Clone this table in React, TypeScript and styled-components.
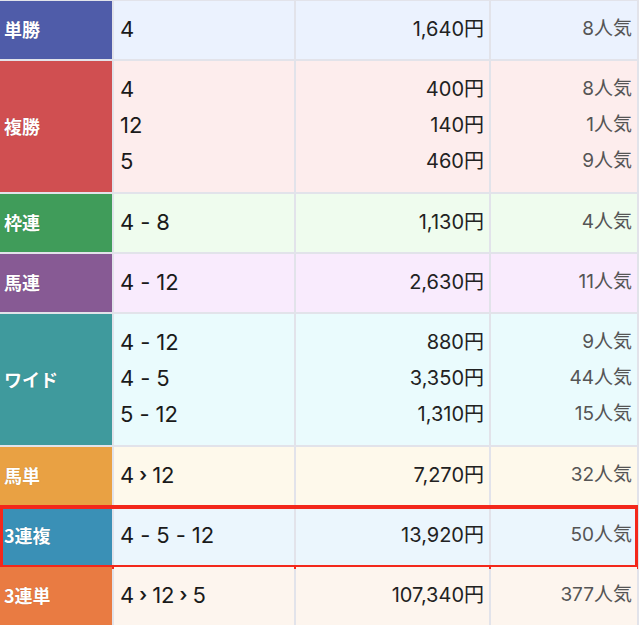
import React from "react";
import styled, { createGlobalStyle } from "styled-components";

const Global = createGlobalStyle`
  html, body { margin: 0; padding: 0; background: #ffffff; }
  body { font-family: Inter, "Noto Sans CJK JP", sans-serif; }
`;

type Row = {
  label: string;
  labelBg: string;
  bg: string;
  sep?: "-" | ">";
  items: { nums: string[]; pay: string; pop: string }[];
  highlight?: boolean;
};

const rows: Row[] = [
  { label: "単勝", labelBg: "#4f5ca9", bg: "#ebf2fe", items: [{ nums: ["4"], pay: "1,640円", pop: "8人気" }] },
  {
    label: "複勝", labelBg: "#d04f51", bg: "#fdeded",
    items: [
      { nums: ["4"], pay: "400円", pop: "8人気" },
      { nums: ["12"], pay: "140円", pop: "1人気" },
      { nums: ["5"], pay: "460円", pop: "9人気" },
    ],
  },
  { label: "枠連", labelBg: "#409c5a", bg: "#effcee", sep: "-", items: [{ nums: ["4", "8"], pay: "1,130円", pop: "4人気" }] },
  { label: "馬連", labelBg: "#875a94", bg: "#f9ebfd", sep: "-", items: [{ nums: ["4", "12"], pay: "2,630円", pop: "11人気" }] },
  {
    label: "ワイド", labelBg: "#3f9a9d", bg: "#eafbfd", sep: "-",
    items: [
      { nums: ["4", "12"], pay: "880円", pop: "9人気" },
      { nums: ["4", "5"], pay: "3,350円", pop: "44人気" },
      { nums: ["5", "12"], pay: "1,310円", pop: "15人気" },
    ],
  },
  { label: "馬単", labelBg: "#e9a143", bg: "#fef9eb", sep: ">", items: [{ nums: ["4", "12"], pay: "7,270円", pop: "32人気" }] },
  { label: "3連複", labelBg: "#3a90b6", bg: "#ebf6fd", sep: "-", highlight: true, items: [{ nums: ["4", "5", "12"], pay: "13,920円", pop: "50人気" }] },
  { label: "3連単", labelBg: "#e97b42", bg: "#fdf5ee", sep: ">", items: [{ nums: ["4", "12", "5"], pay: "107,340円", pop: "377人気" }] },
];

const Table = styled.div`
  display: grid;
  grid-template-columns: 112px 180px 193px 146px;
  column-gap: 2px;
  row-gap: 2px;
  padding: 1px 2px 2px 0;
  width: max-content;
  background: #e2e3ea;
`;

const RowWrap = styled.div<{ $bg: string; $lines: number }>`
  position: relative;
  display: grid;
  grid-column: 1 / -1;
  grid-template-columns: subgrid;
  height: ${(p) => (p.$lines > 1 ? 131 : 58)}px;
  --row-bg: ${(p) => p.$bg};
`;

const Label = styled.div<{ $bg: string }>`
  background: ${(p) => p.$bg};
  color: #ffffff;
  font-family: "Noto Sans CJK JP", sans-serif;
  font-weight: 700;
  font-size: 18px;
  display: flex;
  align-items: center;
  padding-left: 4px;
  padding-bottom: 2px;
  text-shadow: 0 0 1px rgba(0, 0, 0, 0.25);
`;

const Cell = styled.div<{ $align: "left" | "right"; $pr?: number }>`
  background: var(--row-bg);
  display: flex;
  flex-direction: column;
  justify-content: center;
  align-items: ${(p) => (p.$align === "left" ? "flex-start" : "flex-end")};
  padding: 0 ${(p) => p.$pr ?? 5}px 3px 6px;
  box-sizing: border-box;
`;

const Nums = styled.div`
  font-size: 22px;
  line-height: 36px;
  color: #1a1a1a;
  display: flex;
  align-items: center;
`;

const Sep = styled.span<{ $arrow: boolean }>`
  display: inline-block;
  margin: 0 ${(p) => (p.$arrow ? "5px" : "6px")};
  font-size: ${(p) => (p.$arrow ? "19px" : "22px")};
  font-weight: ${(p) => (p.$arrow ? 600 : 400)};
`;

const Pay = styled.div`
  font-size: 20px;
  line-height: 36px;
  color: #222222;
`;

const Pop = styled.div`
  font-size: 19px;
  line-height: 36px;
  color: #555555;
`;

const Highlight = styled.div`
  position: absolute;
  left: 0;
  top: -2px;
  width: 638px;
  height: 64px;
  border: 4px solid #f3281b;
  border-left-width: 3px;
  border-right-width: 3px;
  box-sizing: border-box;
  pointer-events: none;
`;

function Combo({ nums, sep }: { nums: string[]; sep?: "-" | ">" }) {
  return (
    <Nums>
      {nums.map((n, i) => (
        <React.Fragment key={i}>
          {i > 0 && <Sep $arrow={sep === ">"}>{sep === ">" ? "›" : "-"}</Sep>}
          <span>{n}</span>
        </React.Fragment>
      ))}
    </Nums>
  );
}

export default function App() {
  return (
    <>
      <Global />
      <Table>
        {rows.map((r) => (
          <RowWrap key={r.label} $bg={r.bg} $lines={r.items.length}>
            <Label $bg={r.labelBg}>{r.label}</Label>
            <Cell $align="left">
              {r.items.map((it, i) => (
                <Combo key={i} nums={it.nums} sep={r.sep} />
              ))}
            </Cell>
            <Cell $align="right">
              {r.items.map((it, i) => (
                <Pay key={i}>{it.pay}</Pay>
              ))}
            </Cell>
            <Cell $align="right" $pr={5}>
              {r.items.map((it, i) => (
                <Pop key={i}>{it.pop}</Pop>
              ))}
            </Cell>
            {r.highlight && <Highlight />}
          </RowWrap>
        ))}
      </Table>
    </>
  );
}
